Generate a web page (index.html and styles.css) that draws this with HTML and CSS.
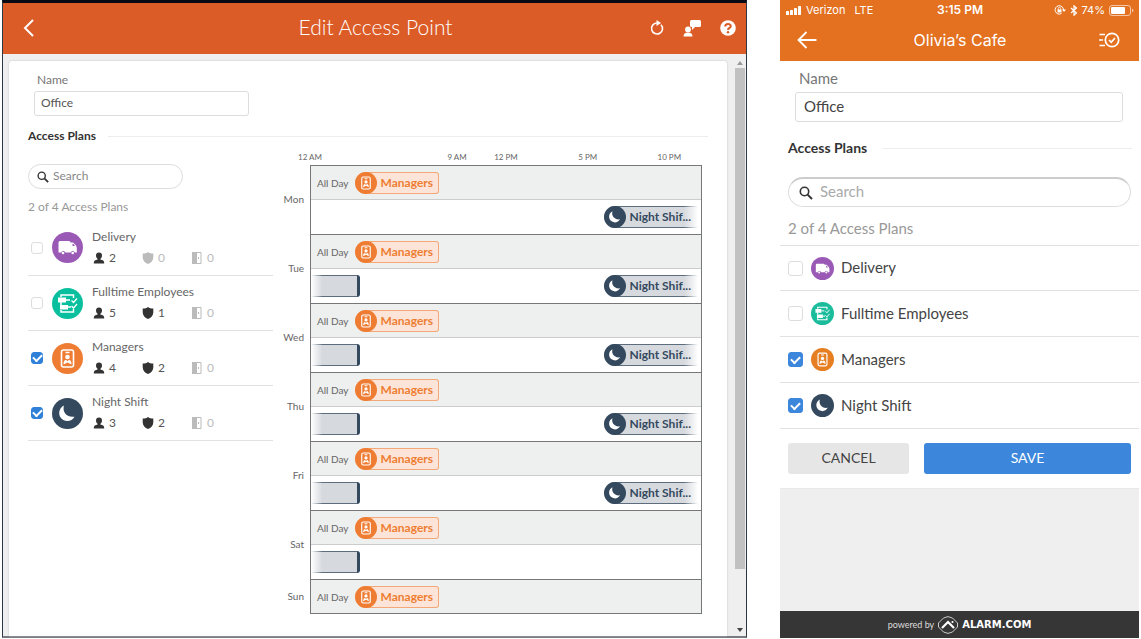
FILE: index.html
```html
<!DOCTYPE html>
<html lang="en">
<head>
<meta charset="utf-8">
<meta name="viewport" content="width=device-width, initial-scale=1">
<title>Edit Access Point</title>
<link rel="stylesheet" href="styles.css">
</head>
<body>
<svg class="sprite" aria-hidden="true">
  <symbol id="truck" viewBox="0 0 31 31"><path fill="#fff" d="M8 9h9a1.500 1.500 0 0 1 1.500 1.500h2.700l3 3.300 .6 2.200v4.500h-2a2.200 2.200 0 0 0-4.200 0h-5.200a2.200 2.200 0 0 0-4.200 0H6.500V10.500A1.500 1.500 0 0 1 8 9z"/><path fill="#9b59b6" d="M20.500 11.800h.8l1.700 2.200h-2.500z"/><circle cx="11" cy="21" r="1.300" fill="#fff"/><circle cx="20.700" cy="21" r="1.300" fill="#fff"/></symbol>
  <symbol id="tasks" viewBox="0 0 31 31"><path fill="none" stroke="#fff" stroke-width="1.500" d="M9 9V7h12.500v3M9 14v3M9 22v2h12.500v-3"/><path fill="#fff" d="M6 9.500h8v5H6zM8 17h8v4.500H8z"/><path fill="none" stroke="#fff" stroke-width="1.300" d="M14 12h4M16 19h3M19.500 12.500l2 2 3.500-4M19.500 18l2 2 3.500-4"/></symbol>
  <symbol id="badge" viewBox="0 0 31 31"><rect x="9.500" y="7" width="12" height="17" rx="2" fill="none" stroke="#fff" stroke-width="1.600"/><path stroke="#fff" stroke-width="1.400" d="M13.500 9.500h4"/><circle cx="15.500" cy="14" r="2.300" fill="#fff"/><path fill="#fff" d="M11.500 21.500c0-3 1-4.500 2.500-4.700l1.500 1.500 1.500-1.500c1.500.2 2.500 1.700 2.500 4.700l-4-2z"/></symbol>
  <symbol id="moon" viewBox="0 0 31 31"><path fill="#fff" d="M12 7.500c-2 6 2.500 12.500 10.500 11.200-2 4-7 5.700-11.200 3.300C5.500 18.700 6 10.300 12 7.500z"/></symbol>
  <symbol id="person" viewBox="0 0 12 12"><path d="M6 .5c2 0 3 1.300 3 3 0 1.500-.7 2.800-1.600 3.300v.7c2.300.4 3.800 1.300 3.800 3.500v.5H.8V11c0-2.200 1.500-3.100 3.800-3.500v-.7C3.700 6.300 3 5 3 3.500c0-1.700 1-3 3-3z"/></symbol>
  <symbol id="shield" viewBox="0 0 12 12"><path d="M6 0c1.300 1 3 1.500 5.300 1.500v4C11.300 8.500 9 10.800 6 12 3 10.800.7 8.500.7 5.500v-4C3 1.500 4.700 1 6 0z"/></symbol>
  <symbol id="door" viewBox="0 0 12 12"><path d="M1 0h5v12H1z"/><path fill="none" stroke="currentColor" d="M5.500.5h4.500v11H5.500"/><path d="M7 5h1v2H7z"/></symbol>
  <symbol id="search" viewBox="0 0 14 14"><circle cx="5.500" cy="5.500" r="4.200" fill="none" stroke="#333" stroke-width="1.600"/><path stroke="#333" stroke-width="2" d="M8.600 8.600l4.400 4.400"/></symbol>
</svg>
<main class="screens">
  <section class="desktop">
    <header class="bar">
      <button class="icon-btn" aria-label="Back"><svg width="12" height="18" viewBox="0 0 12 18"><path fill="none" stroke="#fff" stroke-width="2" d="M10 1L2 9l8 8"/></svg></button>
      <h1>Edit Access Point</h1>
      <div class="tools">
        <button class="icon-btn" aria-label="Refresh"><svg width="14" height="18" viewBox="0 0 14 18"><path fill="none" stroke="#fff" stroke-width="1.600" d="M11 5.700a5.500 5.500 0 1 1-4.200-1.700"/><path fill="#fff" d="M6.500 1l4.500 3-4.500 3z"/></svg></button>
        <button class="icon-btn" aria-label="Contact support"><svg width="18" height="18" viewBox="0 0 18 18" fill="#fff"><rect x="7" y="1" width="11" height="7" rx="1.500"/><path d="M9 7h4l-4 4z"/><circle cx="5" cy="10.500" r="2.900"/><path d="M.5 17.500c0-2.500 1.500-3.500 3-3.700h3c1.500.2 3 1.200 3 3.700z"/></svg></button>
        <button class="icon-btn" aria-label="Help"><svg width="16" height="16" viewBox="0 0 16 16"><circle cx="8" cy="8" r="7.800" fill="#fff"/><path fill="none" stroke="#dc5c28" stroke-width="2" d="M5.200 6.500C5.200 3.200 10.800 3.200 10.800 6.200 10.800 8 8 7.800 8 10"/><circle cx="8" cy="12.200" r="1.200" fill="#dc5c28"/></svg></button>
      </div>
    </header>
    <div class="desk-body">
      <div class="card">
        <div class="field">
          <label for="d-name">Name</label>
          <input id="d-name" type="text" value="Office">
        </div>
        <h2 class="section">Access Plans</h2>
        <div class="columns">
          <div class="plans">
            <label class="search"><svg width="12" height="12"><use href="#search"/></svg><input type="search" placeholder="Search" aria-label="Search"></label>
            <p class="count">2 of 4 Access Plans</p>
            <ul class="plan-list">
              <li class="plan"><input type="checkbox" id="d1"><svg class="disc purple"><use href="#truck"/></svg><div class="info"><label for="d1">Delivery</label><div class="stats"><span><svg><use href="#person"/></svg>2</span><span class="off"><svg><use href="#shield"/></svg>0</span><span class="off"><svg><use href="#door"/></svg>0</span></div></div></li>
              <li class="plan"><input type="checkbox" id="d2"><svg class="disc green"><use href="#tasks"/></svg><div class="info"><label for="d2">Fulltime Employees</label><div class="stats"><span><svg><use href="#person"/></svg>5</span><span><svg><use href="#shield"/></svg>1</span><span class="off"><svg><use href="#door"/></svg>0</span></div></div></li>
              <li class="plan"><input type="checkbox" id="d3" checked><svg class="disc orange"><use href="#badge"/></svg><div class="info"><label for="d3">Managers</label><div class="stats"><span><svg><use href="#person"/></svg>4</span><span><svg><use href="#shield"/></svg>2</span><span class="off"><svg><use href="#door"/></svg>0</span></div></div></li>
              <li class="plan"><input type="checkbox" id="d4" checked><svg class="disc navy"><use href="#moon"/></svg><div class="info"><label for="d4">Night Shift</label><div class="stats"><span><svg><use href="#person"/></svg>3</span><span><svg><use href="#shield"/></svg>2</span><span class="off"><svg><use href="#door"/></svg>0</span></div></div></li>
            </ul>
          </div>
          <div class="schedule">
            <div class="hours"><span class="h0">12 AM</span><span class="h9">9 AM</span><span class="h12">12 PM</span><span class="h17">5 PM</span><span class="h22">10 PM</span></div>
            <div class="day"><span class="day-name">Mon</span><div class="slots"><div class="allday">All Day <span class="chip"><svg class="disc orange"><use href="#badge"/></svg>Managers</span></div><div class="hourly"><span class="evening"><svg class="disc navy"><use href="#moon"/></svg>Night Shif...</span></div></div></div>
            <div class="day"><span class="day-name">Tue</span><div class="slots"><div class="allday">All Day <span class="chip"><svg class="disc orange"><use href="#badge"/></svg>Managers</span></div><div class="hourly"><span class="morning"></span><span class="evening"><svg class="disc navy"><use href="#moon"/></svg>Night Shif...</span></div></div></div>
            <div class="day"><span class="day-name">Wed</span><div class="slots"><div class="allday">All Day <span class="chip"><svg class="disc orange"><use href="#badge"/></svg>Managers</span></div><div class="hourly"><span class="morning"></span><span class="evening"><svg class="disc navy"><use href="#moon"/></svg>Night Shif...</span></div></div></div>
            <div class="day"><span class="day-name">Thu</span><div class="slots"><div class="allday">All Day <span class="chip"><svg class="disc orange"><use href="#badge"/></svg>Managers</span></div><div class="hourly"><span class="morning"></span><span class="evening"><svg class="disc navy"><use href="#moon"/></svg>Night Shif...</span></div></div></div>
            <div class="day"><span class="day-name">Fri</span><div class="slots"><div class="allday">All Day <span class="chip"><svg class="disc orange"><use href="#badge"/></svg>Managers</span></div><div class="hourly"><span class="morning"></span><span class="evening"><svg class="disc navy"><use href="#moon"/></svg>Night Shif...</span></div></div></div>
            <div class="day"><span class="day-name">Sat</span><div class="slots"><div class="allday">All Day <span class="chip"><svg class="disc orange"><use href="#badge"/></svg>Managers</span></div><div class="hourly"><span class="morning"></span></div></div></div>
            <div class="day"><span class="day-name">Sun</span><div class="slots"><div class="allday">All Day <span class="chip"><svg class="disc orange"><use href="#badge"/></svg>Managers</span></div></div></div>
          </div>
        </div>
      </div>
      <div class="scrollbar" aria-hidden="true"><svg width="6" height="4"><path fill="#999" d="M0 4l3-4 3 4z"/></svg><div class="track"><div class="thumb"></div></div><svg width="6" height="4"><path fill="#444" d="M0 0h6L3 4z"/></svg></div>
    </div>
  </section>

  <section class="phone">
    <header class="phone-head">
      <div class="status">
        <div class="carrier"><svg width="16" height="9" viewBox="0 0 16 9" fill="#fff"><rect y="5" width="3" height="4" rx=".6"/><rect x="4" y="4" width="3" height="5" rx=".6"/><rect x="8" y="2" width="3" height="7" rx=".6"/><rect x="12" width="3" height="9" rx=".6"/></svg><span>Verizon</span><span class="lte">LTE</span></div>
        <span class="time">3:15 PM</span>
        <div class="battery">
          <svg width="12" height="10" viewBox="0 0 12 10"><path fill="none" stroke="#fff" d="M9.500 5a4.200 4.200 0 1 0-2 3.500"/><path fill="#fff" d="M8 4.500h4l-2 2.500z"/><rect x="3.500" y="4.500" width="4" height="3" fill="#fff"/><path fill="none" stroke="#fff" stroke-width=".8" d="M4.300 5V3.500a1.200 1.200 0 0 1 2.400 0V5"/></svg>
          <svg width="8" height="11" viewBox="0 0 8 11"><path fill="none" stroke="#fff" stroke-width="1.200" d="M1 3l5.500 5L4 10.200V.8L6.500 3 1 8"/></svg>
          <span>74%</span>
          <svg width="25" height="11" viewBox="0 0 25 11"><rect x=".5" y=".5" width="21" height="10" rx="2.500" fill="none" stroke="#fff" stroke-opacity=".6"/><rect x="2" y="2" width="14" height="7" rx="1" fill="#fff"/><path fill="#fff" fill-opacity=".6" d="M23 3.500c2 1 2 3 0 4z"/></svg>
        </div>
      </div>
      <div class="nav">
        <button class="icon-btn" aria-label="Back"><svg width="20" height="18" viewBox="0 0 20 18"><path fill="none" stroke="#fff" stroke-width="1.800" d="M19.500 9H2M9.500 1L1.500 9l8 8"/></svg></button>
        <h1>Olivia’s Cafe</h1>
        <button class="icon-btn" aria-label="Activity"><svg width="22" height="16" viewBox="0 0 22 16" fill="none" stroke="#fff" stroke-width="1.700"><circle cx="14" cy="8" r="6.700"/><path d="M11 8l2.200 2.200L17 6M1.500 2.500H7M1 8h4M1.500 13.500H7"/></svg></button>
      </div>
    </header>
    <div class="sheet">
      <div class="field">
        <label for="m-name">Name</label>
        <input id="m-name" type="text" value="Office">
      </div>
      <h2 class="section">Access Plans</h2>
      <label class="search"><svg width="14" height="14"><use href="#search"/></svg><input type="search" placeholder="Search" aria-label="Search"></label>
      <p class="count">2 of 4 Access Plans</p>
      <ul class="plan-list">
        <li class="plan"><input type="checkbox" id="m1"><svg class="disc purple"><use href="#truck"/></svg><label for="m1">Delivery</label></li>
        <li class="plan"><input type="checkbox" id="m2"><svg class="disc green"><use href="#tasks"/></svg><label for="m2">Fulltime Employees</label></li>
        <li class="plan"><input type="checkbox" id="m3" checked><svg class="disc orange"><use href="#badge"/></svg><label for="m3">Managers</label></li>
        <li class="plan"><input type="checkbox" id="m4" checked><svg class="disc navy"><use href="#moon"/></svg><label for="m4">Night Shift</label></li>
      </ul>
      <div class="actions"><button class="cancel">CANCEL</button><button class="save">SAVE</button></div>
    </div>
    <footer class="brand"><span>powered by</span><svg width="22" height="18" viewBox="0 0 22 18"><path fill="none" stroke="#ccc" d="M11 .6l4.500 1.400 5 5v4l-5 5L11 17.400 6.500 16l-5-5V7l5-5z"/><path fill="none" stroke="#fff" stroke-width="2.200" d="M5 12l6-6 6 6"/><circle cx="15.500" cy="6" r="1.100" fill="#fff"/></svg><b>ALARM.COM</b></footer>
  </section>
</main>
</body>
</html>
```

FILE: styles.css
```css
* { box-sizing: border-box; }
body { margin: 0; background: #fff; font-family: Lato, "Open Sans", sans-serif; color: #666; }
h1, h2, p, ul { margin: 0; padding: 0; }
h1 { font-weight: 400; color: #fff; text-align: center; }
ul { list-style: none; }
button, input { font: inherit; color: inherit; }
svg { display: block; flex: none; }
.sprite { position: absolute; width: 0; height: 0; }
.icon-btn { border: 0; padding: 0; background: none; display: flex; }

.screens { display: grid; grid-template-columns: minmax(0, 747fr) minmax(0, 359fr); gap: 33px; padding: 0 2px 1px 0; min-height: 100vh; }

/* Shared controls */
input[type="text"] { display: block; width: 100%; border: 1px solid #ddd; border-radius: 3px; background: #fff; color: #555; outline: 0; }
input[type="search"] { appearance: none; flex: 1; min-width: 0; border: 0; padding: 0; background: none; outline: 0; }
input[type="search"]::placeholder { color: #888; opacity: 1; }
.search { display: flex; align-items: center; border: 1px solid #ddd; border-radius: 15px; background: #fff; }
input[type="checkbox"] { appearance: none; flex: none; margin: 0; border: 1px solid #ddd; border-radius: 3px; display: grid; place-items: center; background: #fff; }
input[type="checkbox"]:checked { background: #2f80d8; border-color: #2f80d8; }
input[type="checkbox"]:checked::after { content: ""; width: 7px; height: 4px; margin-bottom: 2px; border: solid #fff; border-width: 0 0 2px 2px; transform: rotate(-45deg); }
.section { display: flex; align-items: center; gap: 12px; font-weight: 700; color: #333; }
.section::after { content: ""; flex: 1; height: 1px; background: #eee; }
.count { color: #999; }
.plan { display: flex; align-items: center; border-bottom: 1px solid #e2e2e2; }
.disc { border-radius: 50%; }
.purple { background: #9b59b6; }
.green { background: #0abf9e; }
.orange { background: #ee7d33; }
.navy { background: #34495e; }

/* Desktop window */
.desktop { display: flex; flex-direction: column; margin-left: 2px; border: solid #2c3843; border-width: 3px 1px 2px; border-top-color: #0a0a14; border-bottom-color: #777b80; background: #efefef; font-size: 12px; line-height: 14px; }
.bar { display: grid; grid-template-columns: 1fr auto 1fr; align-items: center; height: 51px; padding: 0 10px 2px 20px; background: #dc5c28; }
.bar h1 { padding: 0 8px 2px 0; font-size: 21px; line-height: 24px; font-weight: 300; }
.tools { display: flex; align-items: center; justify-content: flex-end; gap: 19px; }
.desk-body { flex: 1; display: flex; gap: 7px; padding: 7px 1px 0 6px; }
.card { flex: 1; min-width: 0; padding: 12px 19px 0; background: #fff; border-radius: 3px 3px 0 0; box-shadow: 0 0 2px #bbb; }
.desktop .field { width: 215px; margin-left: 6px; }
.desktop .field label { display: block; margin: 0 0 4px 3px; color: #777; }
.desktop .field input { height: 25px; padding: 0 6px 2px; }
.desktop .section { margin-top: 13px; font-size: 12px; line-height: 14px; }
.columns { display: grid; grid-template-columns: minmax(0, 245fr) minmax(0, 435fr); margin-top: 7px; }
.desktop .search { width: 155px; height: 25px; margin-top: 14px; padding: 0 8px; gap: 4px; }
.desktop .search input { padding-bottom: 2px; }
.desktop .count { margin: 11px 0 6px; }
.desktop .plan { height: 55px; padding-left: 3px; }
.desktop .plan:first-child { height: 56px; }
.desktop input[type="checkbox"] { width: 12px; height: 12px; }
.desktop .plan .disc { width: 31px; height: 31px; margin: 0 9px; }
.info { display: grid; gap: 7px; padding-bottom: 1px; }
.stats { display: flex; color: #555; }
.stats span { display: flex; align-items: center; gap: 4px; width: 49px; }
.stats svg { width: 12px; height: 12px; margin-left: 1px; color: #333; fill: #333; }
.stats .off, .stats .off svg { color: #bbb; fill: #bbb; }

.schedule { padding-right: 6px; }
.hours, .hourly { display: grid; grid-template-columns: repeat(24, minmax(0, 1fr)); }
.hours { margin-left: 37px; padding-bottom: 1px; font-size: 8px; line-height: 14px; }
.hours span { width: 0; display: flex; justify-content: center; white-space: nowrap; }
.h0 { grid-column: 1; }
.h9 { grid-column: 10; }
.h12 { grid-column: 13; }
.h17 { grid-column: 18; }
.h22 { grid-column: 23; }
.day { display: grid; grid-template-columns: 31px minmax(0, 1fr); gap: 6px; align-items: center; font-size: 10px; }
.day-name { padding-bottom: 2px; text-align: right; }
.slots { border: solid #777; border-width: 1px 1px 0; }
.day:last-child .slots { border-bottom-width: 1px; }
.allday { display: flex; align-items: center; gap: 6px; height: 33px; padding-left: 6px; background: #eef0ef; }
.hourly { height: 35px; border-top: 1px solid #ccc; align-items: center; }
.chip, .evening { display: flex; align-items: center; gap: 4px; height: 22px; font-size: 12px; font-weight: 700; white-space: nowrap; }
.chip { padding-right: 5px; border: 1px solid #f4a877; border-left: 0; border-radius: 11px 3px 3px 11px; background: #fce5d8; color: #ee7d33; }
.chip .disc, .evening .disc { width: 22px; height: 22px; }
.evening { grid-column: 19 / 25; grid-row: 1; margin-right: 3px; border-radius: 11px 0 0 11px; background: linear-gradient(90deg, transparent 85%, #fff), linear-gradient(#5d6d7e, #5d6d7e 1px, #d6d9de 1px, #d6d9de 21px, #5d6d7e 21px); color: #34495e; }
.morning { grid-column: 1 / 4; grid-row: 1; height: 22px; border-right: 3px solid #34495e; border-radius: 0 3px 3px 0; background: linear-gradient(90deg, #fff, transparent 25%), linear-gradient(#5d6d7e, #5d6d7e 1px, #d6d9de 1px, #d6d9de 21px, #5d6d7e 21px); }

.scrollbar { display: flex; flex-direction: column; align-items: center; gap: 3px; width: 11px; padding-bottom: 4px; }
.track { flex: 1; width: 10px; }
.thumb { height: 90%; background: #c1c1c1; }

/* Phone */
.phone { display: flex; flex-direction: column; background: #efefef; font-size: 15px; line-height: 18px; }
.phone-head { height: 61px; background: #e3711f; color: #fff; }
.status { display: grid; grid-template-columns: 1fr auto 1fr; align-items: center; height: 20px; padding: 0 5px 0 6px; font: 11px/14px Inter, sans-serif; }
.carrier, .battery { display: flex; align-items: center; gap: 4px; }
.lte { margin-left: 5px; }
.time { font-size: 12px; font-weight: 600; }
.battery { justify-content: flex-end; }
.nav { display: grid; grid-template-columns: 22px 1fr 22px; align-items: center; height: 40px; padding: 0 19px 0 20px; }
.nav .icon-btn:first-child { margin-left: -3px; }
.nav h1 { font: 16px/20px Inter, sans-serif; }
.sheet { background: #fff; border-bottom: 1px solid #e8e8e8; }
.phone .field { margin: 8px 16px 0 15px; }
.phone .field label { display: block; margin: 0 0 5px 4px; color: #777; }
.phone .field input { height: 30px; padding: 0 8px 2px; color: #444; }
.phone .section { margin: 17px 7px 0 8px; gap: 15px; font-size: 14px; line-height: 18px; }
.phone .search { height: 30px; margin: 20px 8px 0; padding: 0 10px; gap: 7px; border-top: 2px solid #ccc; }
.phone .search input { padding-bottom: 4px; }
.phone .search input::placeholder { color: #aaa; }
.phone .count { margin: 12px 8px 8px; }
.phone .plan-list { border-top: 1px solid #e2e2e2; }
.phone .plan { height: 46px; padding-left: 8px; color: #444; }
.phone .plan:first-child { height: 45px; }
.phone .plan label { padding-bottom: 2px; }
.phone input[type="checkbox"] { width: 15px; height: 15px; }
.phone input[type="checkbox"]:checked { background: #3c86dc; border-color: #3c86dc; }
.phone .plan .disc { width: 23px; height: 23px; margin: 0 7px 0 8px; }
.phone .orange { background: #e67e22; }
.phone .green { background: #1abc9c; }
.actions { display: grid; grid-template-columns: 121fr 207fr; gap: 15px; padding: 14px 8px; }
.actions button { height: 31px; padding: 0 0 2px; border: 0; border-radius: 3px; font-size: 14px; }
.actions .cancel { background: #e6e6e6; color: #444; }
.actions .save { background: #3c86dc; color: #fff; }
.brand { display: flex; align-items: center; justify-content: center; gap: 3px; height: 27px; margin-top: auto; background: #363636; color: #ddd; font-size: 9px; line-height: 14px; }
.brand b { color: #fff; font: 700 10px/14px "DejaVu Sans", sans-serif; }
```
